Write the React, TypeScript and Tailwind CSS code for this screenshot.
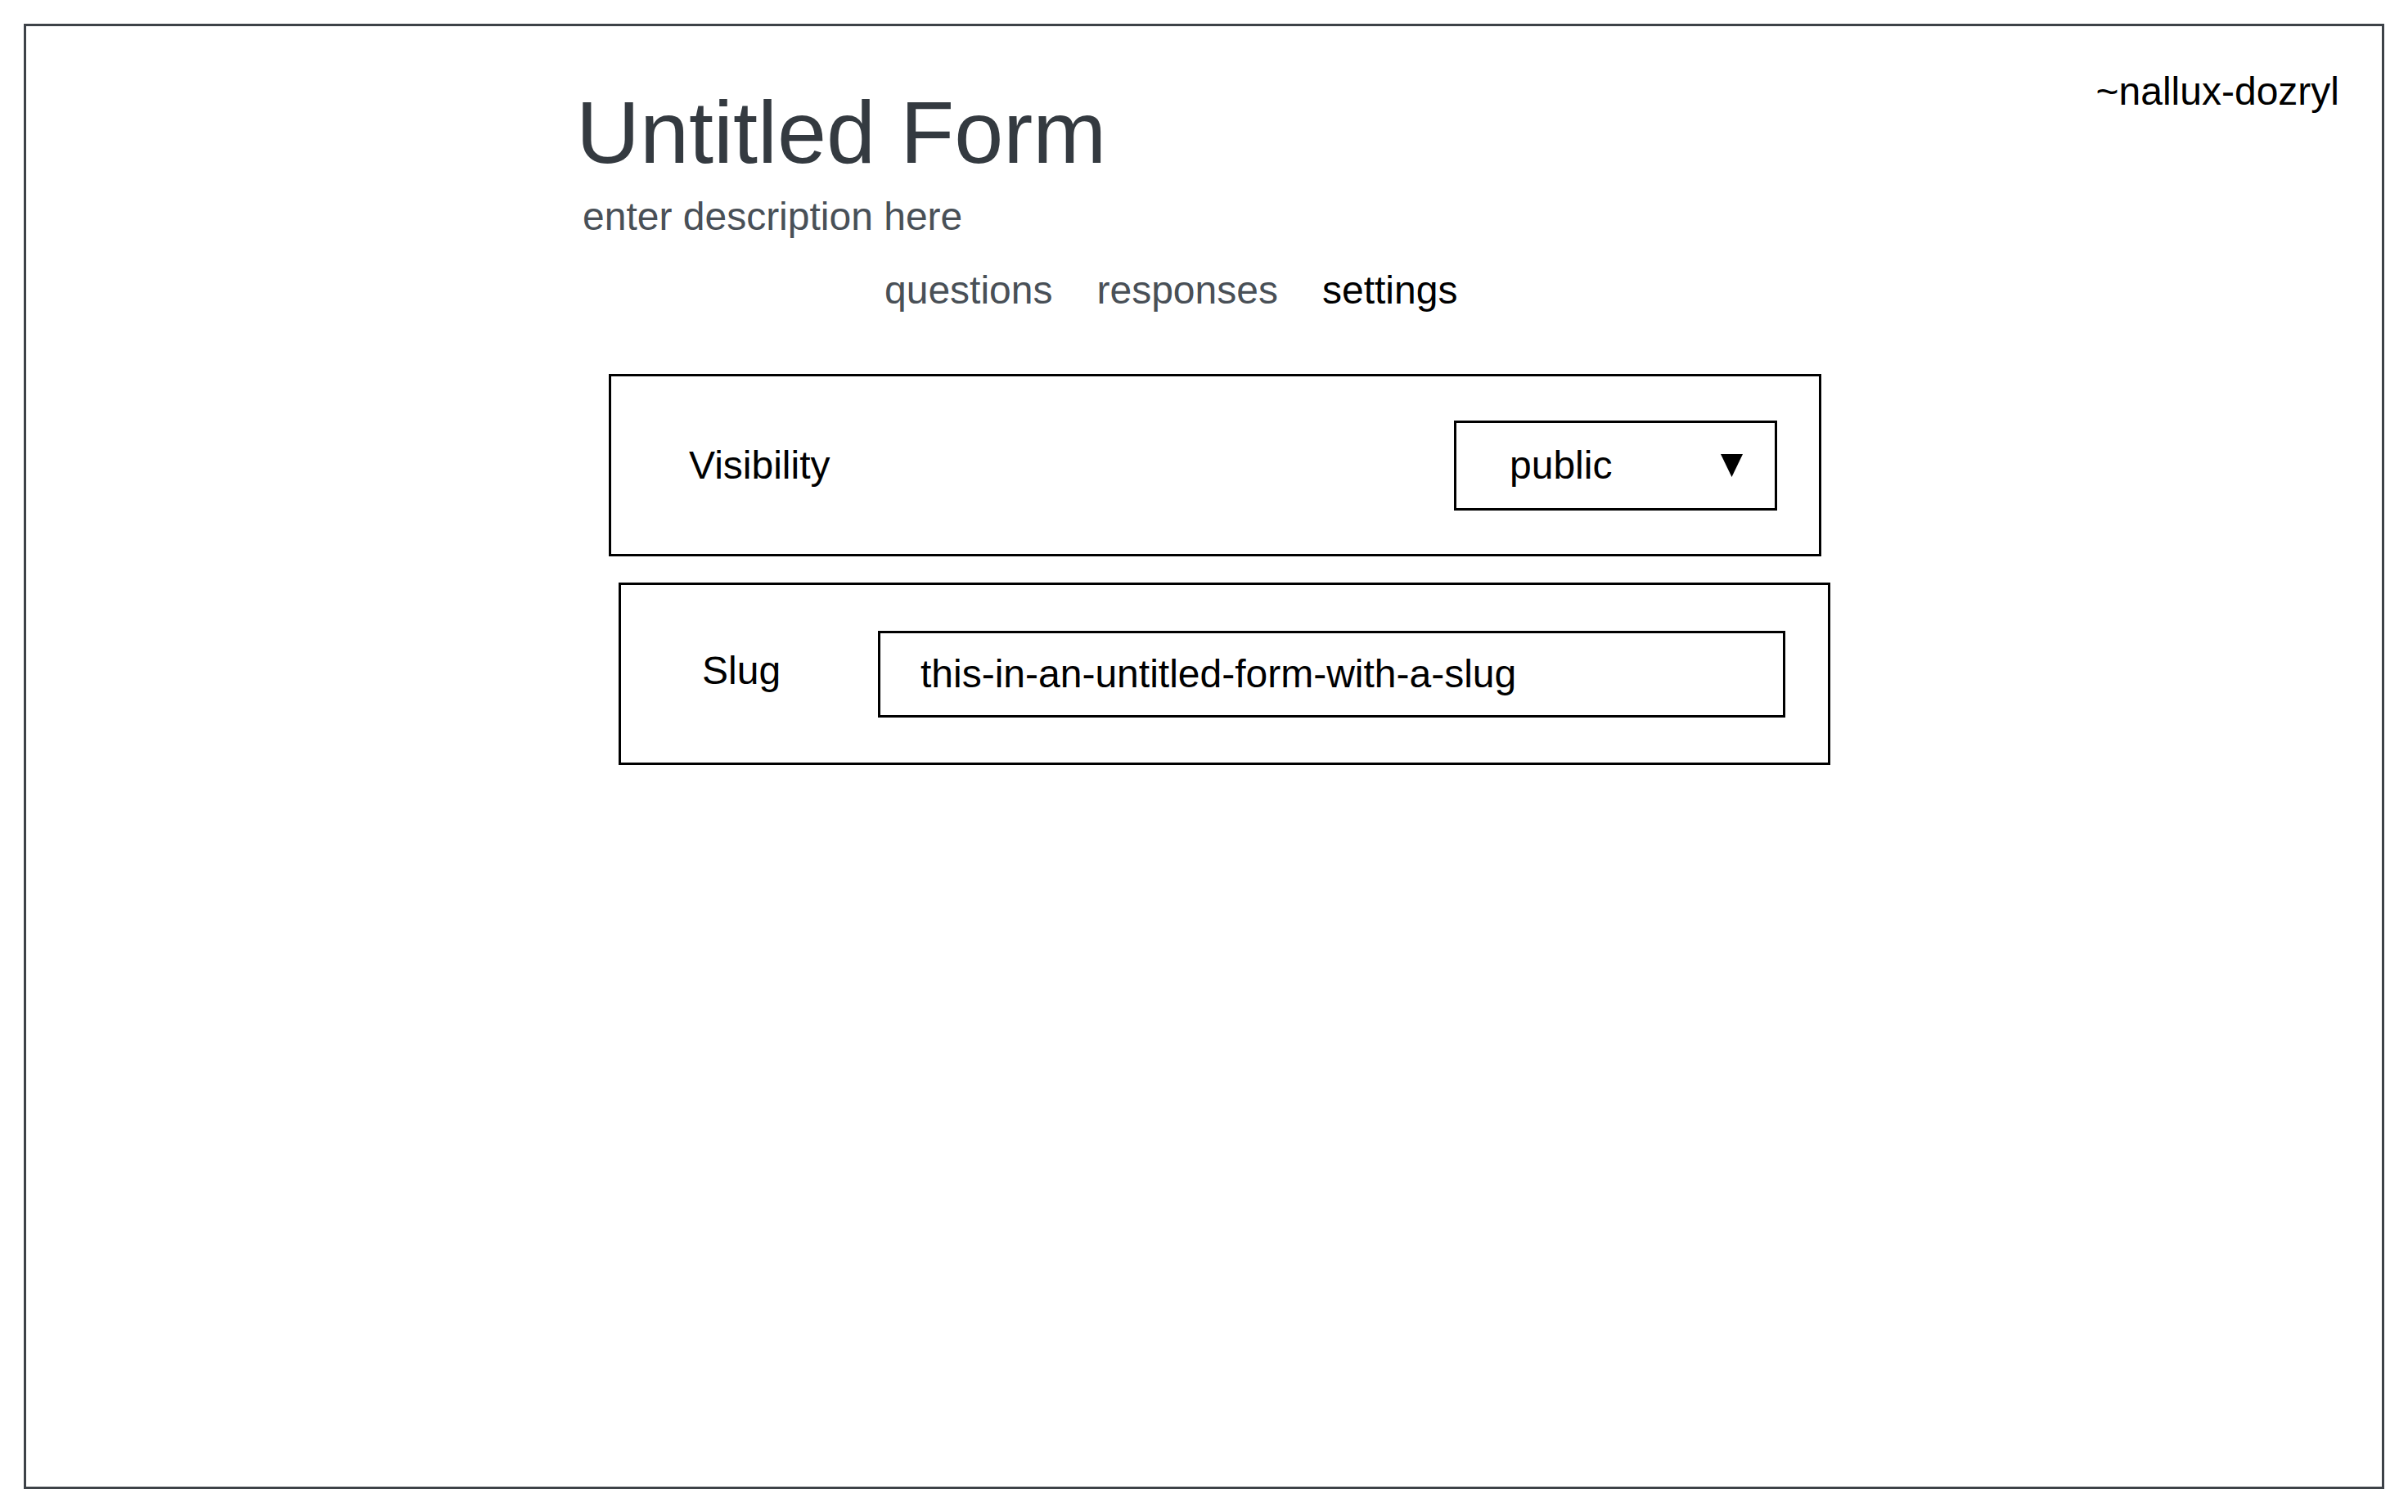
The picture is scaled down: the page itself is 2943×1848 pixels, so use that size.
export default function App() {
  return (
    <div className="min-h-screen bg-white font-['Liberation_Sans',Arial,sans-serif]">
      <div className="m-[29px] h-[1791px] border-[3px] border-[#3d4248]">
        <div className="flex items-start">
          <div className="ml-[672px] pt-[76px]">
            <h1 className="text-[108px] leading-none text-[#343a40]">Untitled Form</h1>
            <p className="ml-[8px] mt-[25px] text-[48px] leading-none text-[#495057]">
              enter description here
            </p>
            <nav className="ml-[377px] mt-[42px] flex gap-[54px] text-[48px] leading-none">
              <span className="text-[#495057]">questions</span>
              <span className="text-[#495057]">responses</span>
              <span className="text-black">settings</span>
            </nav>
          </div>
          <div className="ml-auto mr-[52px] mt-[56px] text-[48px] leading-none text-black">
            ~nallux-dozryl
          </div>
        </div>

        <div className="ml-[712px] mt-[78px] flex h-[223px] w-[1482px] items-center justify-between border-[3px] border-black pl-[95px] pr-[51px]">
          <span className="text-[48px] leading-none text-black">Visibility</span>
          <div className="flex h-[110px] w-[395px] items-center justify-between border-[3px] border-black pl-[65px] pr-[39px]">
            <span className="text-[48px] leading-none text-black">public</span>
            <svg width="27" height="28" viewBox="0 0 27 28">
              <polygon points="0,0 27,0 13.5,28" fill="black" />
            </svg>
          </div>
        </div>

        <div className="ml-[724px] mt-[32px] flex h-[223px] w-[1481px] items-center border-[3px] border-black pl-[99px] pr-[52px]">
          <span className="mb-[7px] text-[48px] leading-none text-black">Slug</span>
          <input
            readOnly
            defaultValue="this-in-an-untitled-form-with-a-slug"
            className="ml-auto h-[106px] w-[1109px] border-[3px] border-black pl-[49px] text-[48px] leading-none text-black outline-none"
          />
        </div>
      </div>
    </div>
  );
}
